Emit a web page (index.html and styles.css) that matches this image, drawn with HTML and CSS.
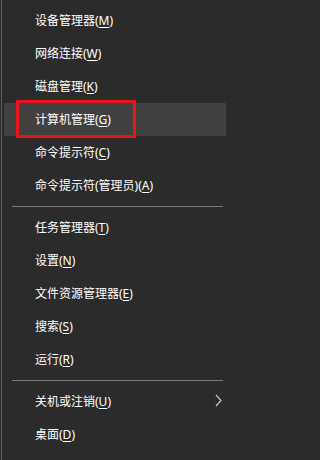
FILE: index.html
```html
<!DOCTYPE html>
<html lang="zh-CN">
<head>
<meta charset="utf-8">
<link rel="stylesheet" href="styles.css">
</head>
<body>
<div class="menu">
  <div class="item"><span class="label">设备管理器(<u>M</u>)</span></div>
  <div class="item"><span class="label">网络连接(<u>W</u>)</span></div>
  <div class="item"><span class="label">磁盘管理(<u>K</u>)</span></div>
  <div class="item active"><span class="label">计算机管理(<u>G</u>)</span><span class="mark"></span></div>
  <div class="item"><span class="label">命令提示符(<u>C</u>)</span></div>
  <div class="item"><span class="label">命令提示符(管理员)(<u>A</u>)</span></div>
  <div class="sep"></div>
  <div class="item"><span class="label">任务管理器(<u>T</u>)</span></div>
  <div class="item"><span class="label">设置(<u>N</u>)</span></div>
  <div class="item"><span class="label">文件资源管理器(<u>E</u>)</span></div>
  <div class="item"><span class="label">搜索(<u>S</u>)</span></div>
  <div class="item"><span class="label">运行(<u>R</u>)</span></div>
  <div class="sep"></div>
  <div class="item"><span class="label">关机或注销(<u>U</u>)</span>
    <svg class="chev" width="7" height="13" viewBox="0 0 7 13"><path d="M1 1 L6 6.5 L1 12" fill="none" stroke="#c8c8c8" stroke-width="1.2"/></svg>
  </div>
  <div class="item"><span class="label">桌面(<u>D</u>)</span></div>
</div>
</body>
</html>
```

FILE: styles.css
```css
html, body {
  margin: 0;
  padding: 0;
  background: #2b2b2b;
  height: 100%;
}
body {
  padding-left: 1px;
  box-sizing: border-box;
}
.menu {
  width: 232px;
  border-left: 1px solid #5a5a5a;
  height: 460px;
  box-sizing: border-box;
  padding: 4px 7px 0 2px;
  font-family: "Noto Sans", "Noto Sans CJK SC", sans-serif;
  font-size: 12px;
  color: #ffffff;
}
.item {
  position: relative;
  height: 33px;
  display: flex;
  align-items: center;
  padding-left: 31px;
  padding-right: 4px;
}
.label {
  flex: 1;
  line-height: 16px;
}
.label u {
  text-decoration-thickness: 1px;
  text-underline-offset: 2px;
}
.active {
  background: #414141;
}
.mark {
  position: absolute;
  left: 12px;
  top: -3px;
  width: 114px;
  height: 32px;
  border: 3px solid #e8141c;
}
.sep {
  height: 1px;
  background: #7a7a7a;
  margin: 4px 3px 4px 8px;
}
.chev {
  display: block;
  margin-top: -3px;
}
```
